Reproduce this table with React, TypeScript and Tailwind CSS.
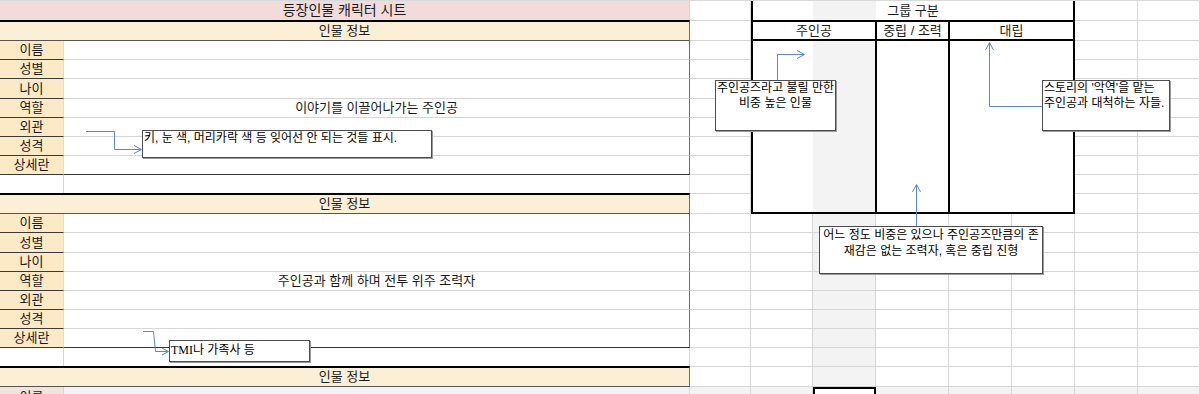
import React from "react";

const LBL_BORDER = "border-b-[#3a3a3a]";

function LabelRow({
  label,
  h,
  last,
  text,
}: {
  label: string;
  h: string;
  last?: boolean;
  text?: string;
}) {
  return (
    <div className={`flex shrink-0 ${h}`}>
      <div
        className={`w-[64px] shrink-0 bg-[#fce9c6] border-b ${LBL_BORDER} border-r border-r-[#e8dcc2] flex items-center justify-center text-[13px]`}
      >
        {label}
      </div>
      <div
        className={`flex-1 border-b ${last ? "border-b-[#333333]" : "border-b-[#d6d6d6]"} border-r border-r-[#6e6e6e] flex items-center justify-center text-[13px]`}
      >
        {text}
      </div>
    </div>
  );
}

function Header() {
  return (
    <div className="h-[21px] shrink-0 bg-[#fbefd6] border-t-2 border-t-black border-b border-b-[#555555] border-r border-r-[#6e6e6e] flex items-center justify-center text-[13px]">
      인물 정보
    </div>
  );
}

function BlankRow() {
  return (
    <div className="flex h-[18px] shrink-0">
      <div className="w-[64px] shrink-0 border-r border-r-[#d6d6d6]" />
      <div className="flex-1 border-r border-r-[#d6d6d6]" />
    </div>
  );
}

function Block({ role, hs }: { role: string; hs: string[] }) {
  const labels = ["이름", "성별", "나이", "역할", "외관", "성격", "상세란"];
  return (
    <>
      <Header />
      {labels.map((l, i) => (
        <LabelRow
          key={l}
          label={l}
          h={hs[i]}
          last={i === labels.length - 1}
          text={l === "역할" ? role : undefined}
        />
      ))}
      <BlankRow />
    </>
  );
}

function RightGrid() {
  const cells: React.ReactNode[] = [];
  for (let r = 0; r < 21; r++) {
    for (let c = 0; c < 8; c++) {
      if (r <= 10 && c >= 1 && c <= 5) continue;
      const selected = r === 20 && c === 2;
      let cls = "border-r border-b border-[#d6d6d6]";
      if (selected) cls = "border-2 border-black bg-white";
      else if (c === 2 || r === 20) cls += " bg-[#f3f3f3]";
      cells.push(<div key={`${r}-${c}`} className={cls} />);
    }
  }
  return (
    <div className="grid w-[510px] shrink-0 grid-cols-[61px_62px_63px_73px_63px_63px_63px_62px] grid-rows-[20px_20px_19px_19px_20px_19px_19px_19px_19px_19px_20px_19px_20px_19px_19px_19px_19px_19px_19px_20px_20px]">
      <div className="col-start-2 col-end-7 row-start-1 row-end-12 flex flex-col border-l-2 border-r-2 border-b-2 border-black bg-white text-[13px]">
        <div className="h-[21px] shrink-0 border-b-2 border-black flex items-center justify-center bg-[linear-gradient(to_right,#ffffff_60px,#f3f3f3_60px,#f3f3f3_123px,#ffffff_123px)]">
          그룹 구분
        </div>
        <div className="h-[19px] shrink-0 flex border-b-2 border-black">
          <div className="w-[124px] shrink-0 border-r-2 border-black flex items-center justify-center">
            주인공
          </div>
          <div className="w-[73px] shrink-0 border-r-2 border-black flex items-center justify-center whitespace-nowrap">
            중립 / 조력
          </div>
          <div className="flex-1 flex items-center justify-center">대립</div>
        </div>
        <div className="flex-1 flex">
          <div className="w-[124px] shrink-0 border-r-2 border-black bg-[linear-gradient(to_right,#ffffff_60px,#f3f3f3_60px)]" />
          <div className="w-[73px] shrink-0 border-r-2 border-black" />
          <div className="flex-1" />
        </div>
      </div>
      {cells}
    </div>
  );
}

const box =
  "absolute bg-white border border-[#4d4d4d] shadow-[1px_1px_0_0_#9a9a9a] text-[12px] leading-[15px] text-black whitespace-nowrap";

export default function App() {
  return (
    <div className="relative w-[1200px] h-[394px] overflow-hidden bg-white border-t border-t-[#d9d9d9] text-[#1a1a1a] font-['Liberation_Sans','Noto_Sans_CJK_KR',sans-serif]">
      <div className="flex">
        <div className="w-[690px] shrink-0 flex flex-col">
          <div className="h-[19px] shrink-0 bg-[#f2dcdb] border-r border-r-[#d6d6d6] flex items-center justify-center text-[14px]">
            등장인물 캐릭터 시트
          </div>
          <Block
            role="이야기를 이끌어나가는 주인공"
            hs={["h-[19px]", "h-[19px]", "h-[20px]", "h-[19px]", "h-[19px]", "h-[19px]", "h-[19px]"]}
          />
          <Block
            role="주인공과 함께 하며 전투 위주 조력자"
            hs={["h-[19px]", "h-[20px]", "h-[19px]", "h-[19px]", "h-[19px]", "h-[19px]", "h-[19px]"]}
          />
          <Header />
          <div className="flex h-[20px] shrink-0 bg-[#f3f3f3]">
            <div className="w-[64px] shrink-0 bg-[#f1e5da] border-r border-r-[#d6d6d6] flex items-start justify-center pt-[2px] text-[13px] leading-[16px]">
              이름
            </div>
            <div className="flex-1 border-r border-r-[#d6d6d6]" />
          </div>
        </div>
        <RightGrid />
      </div>

      <svg
        className="absolute left-0 top-0 pointer-events-none"
        width="1200"
        height="394"
        viewBox="0 0 1200 394"
        fill="none"
        stroke="#5b83e0"
        strokeWidth="1"
      >
        <polyline points="86,130.5 114.5,130.5 114.5,148.5 141,148.5" />
        <polyline points="134,144.5 141.5,148.5 134,152.5" />
        <polyline points="777.5,79 777.5,53.5 804,53.5" />
        <polyline points="797,49.5 804.5,53.5 797,57.5" />
        <polyline points="1042,105.5 989.5,105.5 989.5,42" />
        <polyline points="985.5,49 989.5,41.5 993.5,49" />
        <polyline points="916.5,225 916.5,184" />
        <polyline points="912.5,191 916.5,183.5 920.5,191" />
        <polyline points="143,330.5 153.5,330.5 155.5,350.5 168,350.5" />
        <polyline points="162,347 168.5,350.5 162,354" />
      </svg>

      <div className={`${box} left-[142px] top-[129px] w-[290px] h-[28px] pl-[1px]`}>
        키, 눈 색, 머리카락 색 등 잊어선 안 되는 것들 표시.
      </div>
      <div className={`${box} left-[715px] top-[79px] w-[121px] h-[51px] text-center`}>
        주인공즈라고 불릴 만한
        <br />
        비중 높은 인물
      </div>
      <div className={`${box} left-[1042px] top-[79px] w-[128px] h-[51px] pl-[1px]`}>
        스토리의 '악역'을 맡는
        <br />
        주인공과 대척하는 자들.
      </div>
      <div className={`${box} left-[819px] top-[225px] w-[224px] h-[48px] text-center leading-[16px]`}>
        어느 정도 비중은 있으나 주인공즈만큼의 존
        <br />
        재감은 없는 조력자, 혹은 중립 진형
      </div>
      <div className={`${box} left-[169px] top-[339px] w-[141px] h-[22px] pl-[1px] leading-[19px]`}>
        <span className="font-['Liberation_Serif',serif] text-[12px]">TMI</span>나 가족사 등
      </div>
    </div>
  );
}
